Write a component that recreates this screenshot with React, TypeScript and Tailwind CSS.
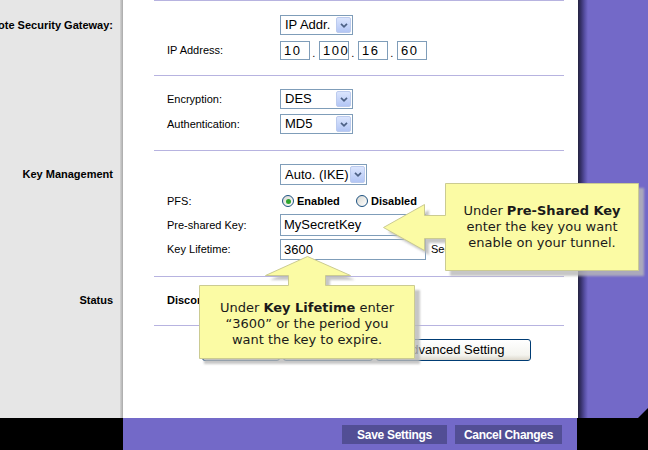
import React from "react";

// column backgrounds, repeated on every row so they read as one continuous panel
const LEFT = "bg-[linear-gradient(to_right,#e6e6e6_120px,#d4d4d4_120px,#a9a9a9_123px)]";
const RIGHT = "bg-[linear-gradient(to_right,#24223f,#37326c_3px,#5a52a8_7px,#7369c8_10px)]";

function Row({
    h,
    label,
    labelTop,
    corner,
    children,
}: {
    h: string;
    label?: string;
    labelTop?: string;
    corner?: boolean;
    children?: React.ReactNode;
}) {
    return (
        <div className={`flex shrink-0 ${h}`}>
            <div className={`w-[123px] shrink-0 overflow-hidden ${LEFT}`}>
                {label && (
                    <div className={`flex h-[21px] items-center justify-end whitespace-nowrap pr-[10px] text-[11px] font-bold ${labelTop}`}>
                        <span className="shrink-0">{label}</span>
                    </div>
                )}
            </div>
            <div className="w-[455px] shrink-0 bg-white">{children}</div>
            <div className={`relative flex-1 ${RIGHT}`}>
                {corner && (
                    <div className="absolute bottom-0 right-0 h-0 w-0 border-b-[10px] border-l-[10px] border-b-black border-l-transparent" />
                )}
            </div>
        </div>
    );
}

function Line() {
    return (
        <Row h="h-[1px]">
            <div className="ml-[31px] h-px w-[410px] bg-[#b7b3e0]" />
        </Row>
    );
}

function Field({ label, h, children }: { label?: string; h: string; children?: React.ReactNode }) {
    return (
        <div className={`flex items-center ${h}`}>
            <div className="w-[157px] shrink-0 pl-[44px] text-[11px]">{label}</div>
            {children}
        </div>
    );
}

function Select({ value, w, h }: { value: string; w: string; h: string }) {
    return (
        <div className={`relative flex items-center border border-[#7f9db9] bg-white pl-[4px] text-[13px] ${w} ${h}`}>
            <span>{value}</span>
            <div className="absolute bottom-[1px] right-[1px] top-[1px] flex w-[15px] items-center justify-center rounded-[2px] border border-[#bccbee] bg-[linear-gradient(to_bottom,#dbe5fd,#b3c6f5)]">
                <svg width="8" height="5" viewBox="0 0 8 5">
                    <path d="M1 0.8 L4 3.8 L7 0.8" stroke="#4d6185" strokeWidth="1.7" fill="none" />
                </svg>
            </div>
        </div>
    );
}

function Input({ value, w, h, className = "" }: { value: string; w: string; h: string; className?: string }) {
    return (
        <div className={`flex shrink-0 items-center border border-[#7f9db9] bg-white pl-[3px] text-[13px] ${w} ${h} ${className}`}>
            {value}
        </div>
    );
}

function Radio({ checked }: { checked?: boolean }) {
    return (
        <span className="flex h-[12px] w-[12px] items-center justify-center rounded-full border border-[#1c5180] bg-[linear-gradient(135deg,#d8d8d2,#ffffff)]">
            {checked && <span className="h-[5px] w-[5px] rounded-full bg-[#2ea52e]" />}
        </span>
    );
}

function XpButton({ children, w }: { children: React.ReactNode; w: string }) {
    return (
        <div className={`flex h-[22px] items-center justify-center rounded-[3px] border border-[#003c74] bg-[linear-gradient(to_bottom,#ffffff,#f4f4ef_75%,#dcd7cb)] text-[13px] ${w}`}>
            {children}
        </div>
    );
}

export default function App() {
    return (
        <div className="relative flex h-[450px] w-[648px] flex-col overflow-hidden bg-black font-['Liberation_Sans',Arial,sans-serif] text-black">
            <Line />

            {/* Remote gateway */}
            <Row h="h-[74px]" label="Remote Security Gateway:" labelTop="mt-[14px]">
                <div className="pt-[14px]">
                    <Field h="h-[20px]">
                        <Select value="IP Addr." w="w-[73px]" h="h-[20px]" />
                    </Field>
                    <Field label="IP Address:" h="mt-[6px] h-[19px]">
                        <div className="flex items-center font-['Liberation_Sans',Arial,sans-serif] tracking-[1.5px]">
                            <Input value="10" w="w-[30px]" h="h-[19px]" />
                            <span className="w-[9px] pt-[5px] text-center text-[11px]">.</span>
                            <Input value="100" w="w-[30px]" h="h-[19px]" />
                            <span className="w-[9px] pt-[5px] text-center text-[11px]">.</span>
                            <Input value="16" w="w-[30px]" h="h-[19px]" />
                            <span className="w-[9px] pt-[5px] text-center text-[11px]">.</span>
                            <Input value="60" w="w-[30px]" h="h-[19px]" />
                        </div>
                    </Field>
                </div>
            </Row>
            <Line />

            {/* Encryption */}
            <Row h="h-[74px]">
                <div className="pt-[13px]">
                    <Field label="Encryption:" h="h-[20px]">
                        <Select value="DES" w="w-[73px]" h="h-[20px]" />
                    </Field>
                    <Field label="Authentication:" h="mt-[5px] h-[20px]">
                        <Select value="MD5" w="w-[73px]" h="h-[20px]" />
                    </Field>
                </div>
            </Row>
            <Line />

            {/* Key management */}
            <Row h="h-[125px]" label="Key Management" labelTop="mt-[13px]">
                <div className="pt-[13px]">
                    <Field h="h-[21px]">
                        <Select value="Auto. (IKE)" w="w-[87px]" h="h-[21px]" />
                    </Field>
                    <Field label="PFS:" h="mt-[10px] h-[12px]">
                        <div className="flex items-center text-[11px] font-bold">
                            <div className="flex w-[76px] items-center gap-[3px] pl-[2px]">
                                <Radio checked />
                                <span>Enabled</span>
                            </div>
                            <div className="flex items-center gap-[3px]">
                                <Radio />
                                <span>Disabled</span>
                            </div>
                        </div>
                    </Field>
                    <Field label="Pre-shared Key:" h="mt-[7px] h-[22px]">
                        <Input value="MySecretKey" w="w-[146px]" h="h-[22px]" />
                    </Field>
                    <Field label="Key Lifetime:" h="mt-[3px] h-[21px]">
                        <Input value="3600" w="w-[146px]" h="h-[21px]" />
                        <span className="ml-[5px] text-[11px]">Sec.</span>
                    </Field>
                </div>
            </Row>
            <Line />

            {/* Status */}
            <Row h="h-[48px]" label="Status" labelTop="mt-[13px]">
                <div className="pt-[16px]">
                    <Field h="h-[14px]">
                        <span className="-ml-[113px] text-[11px] font-bold">Disconnected</span>
                    </Field>
                </div>
            </Row>
            <Line />

            {/* Actions */}
            <Row h="h-[92px]" corner>
                <div className="flex gap-[3px] pl-[79px] pt-[13px]">
                    <XpButton w="w-[78px]">Connect</XpButton>
                    <XpButton w="w-[90px]">View Logs</XpButton>
                    <XpButton w="w-[155px]">Advanced Setting</XpButton>
                </div>
            </Row>

            {/* Footer */}
            <div className="flex h-[32px] shrink-0">
                <div className="w-[123px] shrink-0 bg-black" />
                <div className="flex w-[454px] shrink-0 justify-end gap-[8px] bg-[#7369c8] pr-[15px] pt-[7px] text-[12px] font-bold tracking-[-0.3px] text-white">
                    <div className="flex h-[19px] w-[105px] items-center justify-center bg-[#524e95]">Save Settings</div>
                    <div className="flex h-[19px] w-[107px] items-center justify-center bg-[#524e95]">Cancel Changes</div>
                </div>
                <div className="flex-1 bg-black" />
            </div>

            {/* Callouts */}
            <svg className="pointer-events-none absolute left-0 top-0" width="648" height="450" viewBox="0 0 648 450">
                <defs>
                    <filter id="soft" x="-10%" y="-10%" width="120%" height="120%">
                        <feGaussianBlur stdDeviation="1.2" />
                    </filter>
                </defs>
                <g transform="translate(5,5)" filter="url(#soft)" fill="#b9b9b9" opacity="0.8">
                    <path d="M445 183 H639 V271 H445 V238 H424 V250 L383 227 L424 205 V215 H445 Z" />
                    <path d="M199 285 H288 V275 H265 L307 256 L350 275 H325 V285 H415 V359 H199 Z" />
                </g>
                <g fill="#fbfba4" stroke="#cbcb92" strokeWidth="1">
                    <path d="M445.5 183.5 H638.5 V270.5 H445.5 V238.5 H424.5 V250.5 L383.5 227.5 L424.5 204.5 V215.5 H445.5 Z" />
                    <path d="M199.5 285.5 H288.5 V275.5 H265.5 L307.5 256.5 L350.5 275.5 H325.5 V285.5 H414.5 V358.5 H199.5 Z" />
                </g>
            </svg>
            <div className="absolute left-[445px] top-[183px] flex h-[88px] w-[194px] flex-col items-center justify-center text-center font-['DejaVu_Sans',Verdana,sans-serif] text-[13px] leading-[16px] text-[#1a1a1a]">
                <div>
                    Under <b>Pre-Shared Key</b>
                </div>
                <div>enter the key you want</div>
                <div>enable on your tunnel.</div>
            </div>
            <div className="absolute left-[199px] top-[287px] flex h-[74px] w-[216px] flex-col items-center justify-center text-center font-['DejaVu_Sans',Verdana,sans-serif] text-[13px] leading-[16px] text-[#1a1a1a]">
                <div>
                    Under <b>Key Lifetime</b> enter
                </div>
                <div>“3600” or the period you</div>
                <div>want the key to expire.</div>
            </div>
        </div>
    );
}
